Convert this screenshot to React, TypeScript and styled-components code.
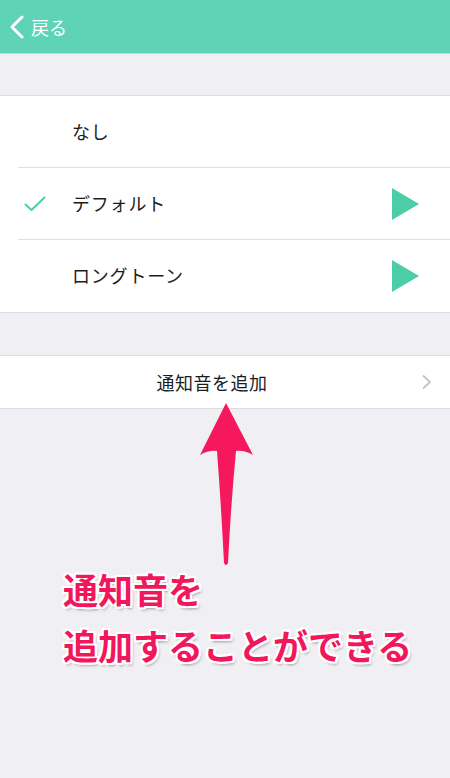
import React, { FC } from "react";
import styled, { createGlobalStyle } from "styled-components";

const GlobalStyle = createGlobalStyle`
  html, body {
    margin: 0;
    padding: 0;
    background: #efeff4;
  }
  body {
    font-family: "Noto Sans CJK JP", "Noto Sans", sans-serif;
  }
`;

const Screen = styled.div`
  position: relative;
  width: 450px;
  height: 778px;
  overflow: hidden;
  background: #efeff4;
  display: flex;
  flex-direction: column;
`;

const NavBar = styled.div`
  height: 54px;
  background: #5fd3b5;
  display: flex;
  align-items: center;
  padding-left: 9px;
  gap: 6px;
  border-bottom: 1px solid #c6d9d3;
  box-sizing: border-box;
`;

const BackLabel = styled.span`
  color: #ffffff;
  font-size: 18px;
  line-height: 1;
  margin-top: 1px;
`;

const Group = styled.div<{ gapTop: number }>`
  margin-top: ${({ gapTop }) => gapTop}px;
  background: #ffffff;
  border-top: 1px solid #dcdce0;
  border-bottom: 1px solid #dcdce0;
`;

const Row = styled.div<{ last?: boolean }>`
  height: 72px;
  display: flex;
  align-items: center;
  position: relative;
  box-sizing: border-box;
  border-bottom: ${({ last }) => (last ? "none" : "1px solid #e0e0e4")};
  margin-left: 18px;
`;

const CheckCell = styled.div`
  width: 54px;
  display: flex;
  align-items: center;
  padding-left: 6px;
  box-sizing: border-box;
`;

const RowLabel = styled.span`
  flex: 1;
  font-size: 18px;
  color: #1c1c1c;
  letter-spacing: 0.8px;
  margin-top: -2px;
`;

const PlayCell = styled.div`
  width: 58px;
  display: flex;
  align-items: center;
`;

const AddRow = styled.div`
  height: 52px;
  display: flex;
  align-items: center;
  justify-content: center;
  position: relative;
  padding-right: 26px;
`;

const AddLabel = styled.span`
  font-size: 18px;
  color: #1c1c1c;
  letter-spacing: 0.5px;
`;

const Chevron = styled.svg`
  position: absolute;
  right: 18px;
  top: 50%;
  transform: translateY(-50%);
`;

const Annotation = styled.div`
  margin-top: 152px;
  padding-left: 63px;
  font-size: 35px;
  font-weight: 700;
  line-height: 56px;
  color: #f0175c;
  text-shadow: -2px 0 #fff, 2px 0 #fff, 0 -2px #fff, 0 2px #fff,
    -2px -2px #fff, 2px 2px #fff, -2px 2px #fff, 2px -2px #fff,
    2px 3px 3px rgba(0, 0, 0, 0.35);
`;

const Arrow = styled.svg`
  position: absolute;
  left: 198px;
  top: 403px;
`;

const Check: FC = () => (
  <svg width="22" height="16" viewBox="0 0 22 16">
    <path d="M1.5 8.5 L7.5 14 L20.5 1.5" fill="none" stroke="#4ccfa8" strokeWidth="2" strokeLinecap="round" strokeLinejoin="round" />
  </svg>
);

const Play: FC = () => (
  <svg width="27" height="32" viewBox="0 0 27 32">
    <polygon points="0,0 27,16 0,32" fill="#4ccda8" />
  </svg>
);

const tones = [
  { name: "なし", checked: false, play: false },
  { name: "デフォルト", checked: true, play: true },
  { name: "ロングトーン", checked: false, play: true },
];

const App: FC = () => (
  <>
    <GlobalStyle />
    <Screen>
      <NavBar>
        <svg width="16" height="24" viewBox="0 0 16 24">
          <path d="M13 2 L3 12 L13 22" fill="none" stroke="#fff" strokeWidth="3" strokeLinecap="round" strokeLinejoin="round" />
        </svg>
        <BackLabel>戻る</BackLabel>
      </NavBar>

      <Group gapTop={41}>
        {tones.map((t, i) => (
          <Row key={t.name} last={i === tones.length - 1}>
            <CheckCell>{t.checked ? <Check /> : null}</CheckCell>
            <RowLabel>{t.name}</RowLabel>
            <PlayCell>{t.play ? <Play /> : null}</PlayCell>
          </Row>
        ))}
      </Group>

      <Group gapTop={42}>
        <AddRow>
          <AddLabel>通知音を追加</AddLabel>
          <Chevron width="10" height="15" viewBox="0 0 10 15">
            <path d="M1.5 1.5 L8 7.5 L1.5 13.5" fill="none" stroke="#c4c4c8" strokeWidth="1.8" strokeLinecap="round" strokeLinejoin="round" />
          </Chevron>
        </AddRow>
      </Group>

      <Annotation>
        通知音を
        <br />
        追加することができる
      </Annotation>

      <Arrow width="58" height="166" viewBox="0 0 58 166">
        <path
          d="M28 0 L55 52 Q46 47 38 48 Q33 100 30 160 Q28 164 26 160 Q23 100 19 48 Q11 47 2 52 Z"
          fill="#f5185c"
        />
      </Arrow>
    </Screen>
  </>
);

export default App;
